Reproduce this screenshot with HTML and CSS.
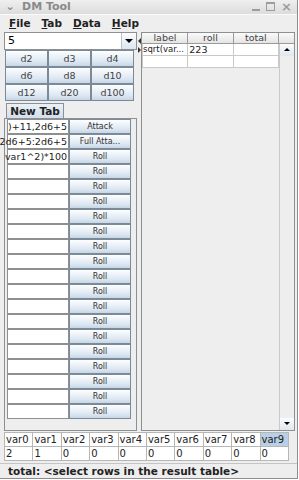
FILE: index.html
```html
<!DOCTYPE html>
<html lang="en">
<head>
    <meta charset="UTF-8">
    <title>DM Tool</title>
    <link rel="stylesheet" href="styles.css">
</head>
<body>
<div class="window">
    <div class="titlebar">
        <span class="sysmenu">&#8964;</span>
        <span class="title">DM Tool</span>
        <div class="wincontrols">
            <span class="wc_min"></span>
            <span class="wc_max"></span>
            <span class="wc_close">&#215;</span>
        </div>
    </div>

    <div class="menubar">
        <span><u>F</u>ile</span>
        <span><u>T</u>ab</span>
        <span><u>D</u>ata</span>
        <span><u>H</u>elp</span>
    </div>

    <div class="main">
        <div class="left">
            <div class="combo">
                <span class="combo_value">5</span>
                <span class="combo_arrow"></span>
            </div>

            <div class="dice">
                <button>d2</button><button>d3</button><button>d4</button>
                <button>d6</button><button>d8</button><button>d10</button>
                <button>d12</button><button>d20</button><button>d100</button>
            </div>

            <div class="tabs">
                <span class="tab">New Tab</span>
            </div>
            <div class="tab_panel">
                <div class="macros" id="macros"></div>
            </div>
        </div>

        <div class="divider">
            <span class="arrow_left"></span>
            <span class="arrow_right"></span>
        </div>

        <div class="right">
            <div class="results">
                <table class="result_table">
                    <tr class="head"><th>label</th><th>roll</th><th>total</th></tr>
                    <tr><td class="label_cell">sqrt(var...</td><td>223</td><td></td></tr>
                    <tr><td></td><td></td><td></td></tr>
                </table>
            </div>
            <div class="scrollbar">
                <span class="sb_corner"></span>
                <span class="sb_up"></span>
                <span class="sb_track"></span>
                <span class="sb_down"></span>
            </div>
        </div>
    </div>

    <table class="vars">
        <tr>
            <th>var0</th><th>var1</th><th>var2</th><th>var3</th><th>var4</th>
            <th>var5</th><th>var6</th><th>var7</th><th>var8</th><th class="selected">var9</th>
        </tr>
        <tr>
            <td>2</td><td>1</td><td>0</td><td>0</td><td>0</td>
            <td>0</td><td>0</td><td>0</td><td>0</td><td>0</td>
        </tr>
    </table>

    <div class="status">total: &lt;select rows in the result table&gt;</div>
</div>

<script>
    const macros = [
        { text: ')+11,2d6+5', button: 'Attack' },
        { text: '2d6+5:2d6+5', button: 'Full Atta...' },
        { text: 'var1^2)*100', button: 'Roll' }
    ];
    while (macros.length < 20) {
        macros.push({ text: '', button: 'Roll' });
    }

    const list = document.getElementById('macros');
    macros.forEach(function (m) {
        const field = document.createElement('div');
        field.className = 'macro_field';
        const span = document.createElement('span');
        span.innerText = m.text;
        field.appendChild(span);

        const btn = document.createElement('button');
        btn.innerText = m.button;

        list.appendChild(field);
        list.appendChild(btn);
    });
</script>
</body>
</html>
```

FILE: styles.css
```css
body {
    margin: 0;
    font-family: 'DejaVu Sans', sans-serif;
    background-color: #fff;
}

.window {
    width: 297px;
    height: 478px;
    background-color: #eeeeee;
    border-right: 1px solid #8d8d8d;
    border-bottom: 1px solid #8d8d8d;
    display: flex;
    flex-direction: column;
}

/* title bar */
.titlebar {
    height: 14px;
    display: flex;
    align-items: center;
    background: linear-gradient(#efefef, #dcdcdc);
    color: #8a8a8a;
    font-size: 11px;
    font-weight: bold;
}

.sysmenu {
    width: 20px;
    text-align: center;
    font-size: 11px;
    line-height: 10px;
}

.title {
    flex: 1;
    padding-left: 2px;
}

.wincontrols {
    display: flex;
    align-items: center;
    gap: 6px;
    padding-right: 5px;
}

.wc_min {
    width: 8px;
    height: 2px;
    margin-top: 6px;
    background-color: #9c9c9c;
}

.wc_max {
    width: 7px;
    height: 6px;
    border: 1px solid #9c9c9c;
    border-top-width: 2px;
}

.wc_close {
    font-size: 13px;
    line-height: 10px;
    color: #9c9c9c;
}

/* menu */
.menubar {
    height: 17px;
    display: flex;
    align-items: center;
    gap: 11px;
    padding-left: 9px;
    font-size: 10.5px;
    font-weight: bold;
    color: #222;
    border-top: 1px solid #fafafa;
}

.main {
    display: flex;
    height: 400px;
    padding-left: 4px;
}

/* left side */
.left {
    width: 133px;
    display: flex;
    flex-direction: column;
}

.combo {
    height: 16px;
    display: flex;
    border: 1px solid #8e8f91;
    background-color: #fff;
}

.combo_value {
    flex: 1;
    font-size: 11px;
    line-height: 16px;
    padding-left: 3px;
}

.combo_arrow {
    width: 14px;
    border-left: 1px solid #b8c3ce;
    background: linear-gradient(#fafcfe, #dde6ef);
    position: relative;
}

.combo_arrow::after {
    content: "";
    position: absolute;
    left: 3px;
    top: 6px;
    border-left: 4px solid transparent;
    border-right: 4px solid transparent;
    border-top: 4px solid #000;
}

button {
    font-family: 'DejaVu Sans', sans-serif;
    font-size: 8px;
    color: #333;
    border: 1px solid #7a8a99;
    border-radius: 0;
    background: linear-gradient(#fdfeff, #dce7f2 70%, #c8d6e4);
    padding: 0;
    margin: 0;
}

.dice {
    display: grid;
    grid-template-columns: 43px 43px 43px;
    grid-auto-rows: 17px;
    margin-left: 1px;
}

.dice button {
    font-size: 9.5px;
    color: #444;
}

.tabs {
    height: 15px;
    margin-top: 2px;
    padding-left: 2px;
    display: flex;
}

.tab {
    width: 56px;
    font-size: 10.5px;
    font-weight: bold;
    color: #222;
    text-align: center;
    line-height: 15px;
    border: 1px solid #8e8f91;
    border-bottom: none;
    background: linear-gradient(#e9f0f7, #d2dfec);
}

.tab_panel {
    flex: 1;
    border: 1px solid #8e8f91;
    padding: 0 5px 0 2px;
}

.macros {
    display: grid;
    grid-template-columns: 62px 62px;
    grid-auto-rows: 15px;
}

.macro_field {
    background-color: #fff;
    border: 1px solid #8e8f91;
    font-size: 9.5px;
    line-height: 13px;
    white-space: nowrap;
    display: flex;
    justify-content: flex-end;
    color: #222;
    padding-right: 1px;
}

/* split divider */
.divider {
    width: 5px;
    display: flex;
    flex-direction: column;
    align-items: center;
    padding-top: 6px;
    gap: 3px;
}

.arrow_left {
    border-top: 3px solid transparent;
    border-bottom: 3px solid transparent;
    border-right: 3px solid #333;
}

.arrow_right {
    border-top: 3px solid transparent;
    border-bottom: 3px solid transparent;
    border-left: 3px solid #333;
}

/* result table */
.right {
    flex: 1;
    display: flex;
    border: 1px solid #8e8f91;
    margin-right: 2px;
}

.results {
    width: 137px;
}

.result_table {
    border-collapse: collapse;
    width: 137px;
    table-layout: fixed;
    font-size: 9.5px;
    color: #222;
}

.result_table th {
    height: 10px;
    font-weight: normal;
    color: #444;
    background: linear-gradient(#fafafa, #e4e4e4);
    border-right: 1px solid #9a9a9a;
    border-bottom: 1px solid #9a9a9a;
    line-height: 10px;
    padding: 0;
}

.result_table td {
    height: 11px;
    background-color: #fff;
    border: 1px solid #c9c9c9;
    padding: 0 1px;
    line-height: 11px;
    white-space: nowrap;
    overflow: hidden;
}

.result_table td.label_cell {
    font-size: 8.5px;
    padding: 0;
}

.scrollbar {
    width: 15px;
    display: flex;
    flex-direction: column;
}

.sb_corner {
    height: 11px;
    box-sizing: border-box;
    border-bottom: 1px solid #9a9a9a;
    background: linear-gradient(#fafafa, #e4e4e4);
}

.sb_track {
    flex: 1;
    border-left: 1px solid #c9c9c9;
}

.sb_up,
.sb_down {
    height: 12px;
    position: relative;
    border-left: 1px solid #c9c9c9;
    background: linear-gradient(#fafcfe, #e0e7ef);
}

.sb_up::after {
    content: "";
    position: absolute;
    left: 4px;
    top: 4px;
    border-left: 3px solid transparent;
    border-right: 3px solid transparent;
    border-bottom: 3px solid #000;
}

.sb_down::after {
    content: "";
    position: absolute;
    left: 4px;
    top: 4px;
    border-left: 3px solid transparent;
    border-right: 3px solid transparent;
    border-top: 3px solid #000;
}

/* variables */
.vars {
    border-collapse: collapse;
    table-layout: fixed;
    width: 285px;
    margin: 1px 0 0 4px;
    font-size: 10px;
    color: #222;
}

.vars th,
.vars td {
    height: 13px;
    padding: 0 1px;
    text-align: left;
    font-weight: normal;
    background-color: #fff;
    border: 1px solid #b6b6b6;
}

.vars th.selected {
    background-color: #b8cfe5;
}

.status {
    margin-top: 2px;
    border-top: 1px solid #c4c4c4;
    padding-left: 8px;
    font-size: 10.5px;
    font-weight: bold;
    color: #222;
    line-height: 14px;
}
```
